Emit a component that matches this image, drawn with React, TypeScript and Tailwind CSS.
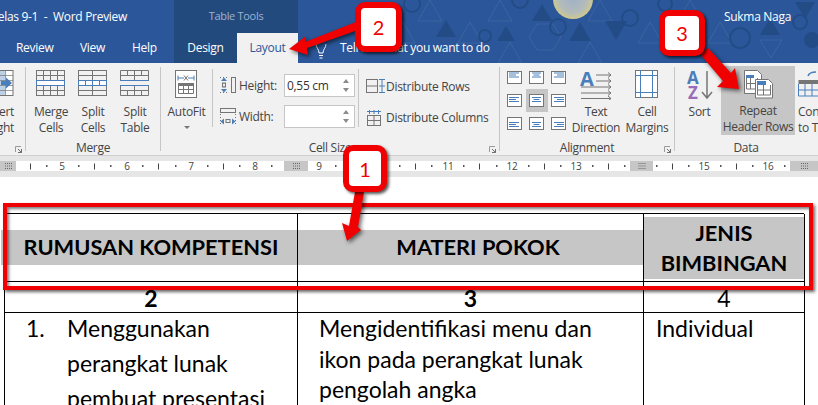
import type { ReactNode } from 'react';

const GRAY = '#757575';
const BLUE = '#4a7ebb';

function MergeIcon() {
  return (
    <svg width="30" height="26" fill="none" stroke={GRAY}>
      <rect x="0.5" y="0.5" width="28" height="25" />
      <path d="M0 5.5h29M0 20.5h29M7.5 0v10M14.5 0v10M21.5 0v10M7.5 15v10M14.5 15v10M21.5 15v10" />
      <rect x="0.5" y="10.5" width="28" height="5" fill="#fff" stroke={BLUE} />
    </svg>
  );
}

function SplitCellsIcon() {
  return (
    <svg width="30" height="26" fill="none" stroke={GRAY}>
      <rect x="0.5" y="0.5" width="28" height="25" />
      <path d="M0 5.5h29M0 20.5h29M14.5 0v10M14.5 15v10" />
      <rect x="0.5" y="10.5" width="28" height="5" fill="#fff" stroke={BLUE} />
      <path d="M7.5 10v5M14.5 10v5M21.5 10v5" stroke={BLUE} />
    </svg>
  );
}

function SplitTableIcon() {
  return (
    <svg width="30" height="26" fill="none" stroke={GRAY}>
      <path d="M0.5 10V0.5h28V10M0.5 15v10.5h28V15M0 5.5h29M0 20.5h29M7.5 0v5M14.5 0v10M21.5 0v5M7.5 20v5M14.5 15v10M21.5 20v5" />
      <path d="M0 10.5h29M0 15.5h29" stroke={BLUE} />
    </svg>
  );
}

function AutoFitIcon() {
  return (
    <svg width="23" height="28" fill="none">
      <rect x="0.5" y="0.5" width="21" height="27" fill="#fff" stroke={GRAY} />
      <path d="M3 8h6M13 8h6M3 5.5v5M19 5.5v5" stroke={BLUE} />
      <path d="M9 5.5l4 5M13 5.5l-4 5" stroke={GRAY} />
      <rect x="3" y="13" width="16" height="3" fill={GRAY} />
      <path d="M3.5 16v7.5h15V16M3 19.5h16M8.5 16v8M13.5 16v8" stroke={GRAY} />
    </svg>
  );
}

function HeightIcon() {
  return (
    <svg width="17" height="17" fill="none">
      <rect x="11.5" y="0.5" width="4" height="15" stroke={GRAY} />
      <path d="M4 3v10" stroke={GRAY} strokeDasharray="1 2" />
      <path d="M1 4l3-3.5L7 4zM1 12l3 3.5L7 12z" fill={BLUE} />
      <rect x="2.5" y="6" width="3" height="4" stroke={GRAY} />
      <path d="M0 0.5h9M0 15.5h9" stroke={GRAY} strokeDasharray="1 2" />
    </svg>
  );
}

function WidthIcon() {
  return (
    <svg width="17" height="17" fill="none">
      <rect x="0.5" y="0.5" width="15" height="4" stroke={GRAY} />
      <path d="M0.5 6v10M15.5 6v10" stroke={GRAY} strokeDasharray="1 2" />
      <path d="M4 10.5L0.5 13.5 4 16.5zM12 10.5l3.5 3-3.5 3z" fill={BLUE} />
      <rect x="6" y="11.5" width="4" height="3" stroke={GRAY} />
    </svg>
  );
}

function DistRowsIcon() {
  return (
    <svg width="20" height="15" fill="none">
      <rect x="0.5" y="0.5" width="11" height="13" stroke={GRAY} />
      <path d="M0 7h12" stroke={GRAY} />
      <path d="M13 0.5h6M13 7h6M13 13.5h6M16 0v14" stroke={BLUE} />
    </svg>
  );
}

function DistColsIcon() {
  return (
    <svg width="20" height="16" fill="none">
      <path d="M1 1.5h14M3.5 0v4M8 0v4M12.5 0v4" stroke={BLUE} />
      <rect x="1.5" y="5.5" width="13" height="10" stroke={GRAY} />
      <path d="M1 10.5h14M8 5v11" stroke={GRAY} />
    </svg>
  );
}

function InsertRightIcon() {
  return (
    <svg width="15" height="26" fill="none" className="-ml-px">
      <rect x="-6" y="0.5" width="20" height="25" fill="#fff" stroke={GRAY} />
      <rect x="-6" y="1" width="12" height="24" fill="#bcd0e6" />
      <path d="M-6 5.5h20M-6 10.5h20M-6 15.5h20M-6 20.5h20M6.5 0v26" stroke={GRAY} strokeOpacity="0.7" />
      <path d="M2 11h5V7.5L13 13l-6 5.500V15H2z" fill={BLUE} />
    </svg>
  );
}

function AlignCell({ h, v }: { h: number; v: number }) {
  const y = [1.5, 3, 5][v];
  const xs = [
    [2, 12, 2, 9, 2, 12],
    [3, 12, 4.5, 10.5, 3, 12],
    [3, 13, 6, 13, 3, 13],
  ][h];
  return (
    <svg width="16" height="14" fill="#fff">
      <rect x="0.5" y="0.5" width="14" height="12" stroke={GRAY} />
      <path
        d={`M${xs[0]} ${y + 0.5}H${xs[1]}M${xs[2]} ${y + 2.5}H${xs[3]}M${xs[4]} ${y + 4.5}H${xs[5]}`}
        stroke={BLUE}
        fill="none"
      />
    </svg>
  );
}

function TextDirectionIcon() {
  return (
    <svg width="32" height="30" fill="none">
      <text x="0" y="16" fill={BLUE} fontSize="20" fontWeight="700" fontFamily="Open Sans">
        A
      </text>
      <path
        d="M16 5h15M16 11h15M1 17h30M1 23h30M1 28.500h30M28 2.500l3 2.500-3 2.500M28 8.500l3 2.500-3 2.500M28 14.500l3 2.500-3 2.500M28 20.500l3 2.500-3 2.500M28 26l3 2.500-3 2.500"
        stroke={GRAY}
      />
    </svg>
  );
}

function CellMarginsIcon() {
  return (
    <svg width="24" height="29" fill="none">
      <rect x="0.5" y="0.5" width="22" height="27" fill="#fff" stroke={GRAY} />
      <path d="M5.500 0v28M17.500 0v28M0 5.500h23M0 22.500h23" stroke={BLUE} />
    </svg>
  );
}

function SortIcon() {
  return (
    <svg width="26" height="30" fill="none">
      <text x="0" y="14" fill={BLUE} fontSize="17" fontWeight="700" fontFamily="Open Sans">
        A
      </text>
      <text x="1" y="29" fill="#9a6bb8" fontSize="17" fontWeight="700" fontFamily="Open Sans">
        Z
      </text>
      <path d="M20 1v26M15 22l5 6 5-6" stroke={GRAY} strokeWidth="1.500" />
    </svg>
  );
}

function RepeatIcon() {
  return (
    <svg width="29" height="29" fill="none">
      <path d="M0.500 0.500h13l4 4v19H0.500z" fill="#fff" stroke={GRAY} />
      <rect x="2" y="5" width="8" height="3" fill={BLUE} />
      <path d="M2.500 8v11h11V8M2 13.500h12M6.500 8v11" stroke={GRAY} />
      <path d="M11.500 9.500h13l4 4v14.500h-17z" fill="#fff" stroke={GRAY} />
      <rect x="13" y="11" width="9" height="4" fill={BLUE} />
      <path d="M13.500 15v10h13V15M13 20h14M19.500 15v10" stroke={GRAY} />
    </svg>
  );
}

function ConvertIcon() {
  return (
    <svg width="20" height="28" fill="none">
      <path d="M10 6c1-3 4-4 8-4" stroke={BLUE} strokeWidth="1.500" />
      <rect x="0.500" y="10" width="20" height="4" fill={GRAY} />
      <path d="M0.500 14v12h20M0 20h20M7 14v12M14 14v12" stroke={BLUE} />
    </svg>
  );
}

function Expander() {
  return (
    <svg width="7" height="7" fill="none" className="absolute right-[3px] bottom-[2px]">
      <path d="M0.500 6V0.500H6" stroke="#9a9a9a" />
      <path d="M3 3l3.500 3.500M6.500 3v3.500H3" stroke="#6f6f6f" />
    </svg>
  );
}

function BigButton({ icon, lines, w, active }: { icon: ReactNode; lines: ReactNode[]; w: string; active?: boolean }) {
  return (
    <div className={`${w} flex flex-col items-center ${active ? 'bg-[#c6c6c6] h-[69px] -mt-[4px] pt-[4px]' : ''}`}>
      <div className="h-[34px] flex justify-center">{icon}</div>
      {lines.map((line, i) => (
        <div key={i} className="h-4 leading-4 whitespace-nowrap">
          {line}
        </div>
      ))}
    </div>
  );
}

function Group({ label, w, children, expander }: { label: string; w: string; children: ReactNode; expander?: boolean }) {
  return (
    <div className={`${w} h-full flex flex-col shrink-0`}>
      <div className="flex-1 flex pt-[7px]">{children}</div>
      <div className="relative h-4 leading-[18px] text-center">
        {label}
        {expander && <Expander />}
      </div>
    </div>
  );
}

function Sep() {
  return <div className="w-px h-[84px] my-1 bg-[#c6c6c6] shrink-0" />;
}

function Spinner({ value }: { value?: string }) {
  return (
    <div className="w-[71px] h-[23px] ml-px bg-white border border-[#c6c6c6] flex items-center justify-between pl-[2px] pr-[5px]">
      <span className="text-[#333]">{value}</span>
      <div className="flex flex-col gap-[5px]">
        <div className="w-0 h-0 border-x-[3px] border-x-transparent border-b-[4px] border-b-[#8a8a8a]" />
        <div className="w-0 h-0 border-x-[3px] border-x-transparent border-t-[4px] border-t-[#8a8a8a]" />
      </div>
    </div>
  );
}

function TitlePattern() {
  const filled = [
    'M542 4l10 17h-20z', 'M580 22l11 19h-22z', 'M605 21h22l-11 19z', 'M506 26l9 15h-18z', 'M680 20h20l-10 17z',
    'M770 18l10 17h-20z', 'M446 20l10 17h-20z', 'M795 2h20l-10 17z',
  ];
  const lines = [
    'M500 0l12 21h-24z', 'M537 24h16l8 13-8 13h-16l-8-13z', 'M600 0l12 21h-24z', 'M650 22l12 21h-24z',
    'M690 0l12 21h-24z', 'M720 22l12 21h-24z', 'M760 40h22l-11 18z', 'M470 22l12 21h-24z', 'M430 0l12 21h-24z', 'M403 22l12 21h-24z',
    'M590 42l12 21h-24z', 'M510 42l12 21h-24z',
  ];
  const rings = [
    [520, 0, 8], [558, 27, 8], [630, 18, 8], [740, 38, 10], [665, 4, 7], [412, 4, 8], [485, 36, 6], [800, 22, 7],
  ];
  return (
    <svg width="518" height="63" viewBox="300 0 518 63" fill="none" className="absolute right-0 top-0">
      <defs>
        <radialGradient id="sun">
          <stop offset="0%" stopColor="#9fb0c8" />
          <stop offset="70%" stopColor="#b4bcb8" />
          <stop offset="100%" stopColor="#cfc88e" />
        </radialGradient>
      </defs>
      {lines.map((d) => (
        <path key={d} d={d} stroke="#3a659f" />
      ))}
      {filled.map((d) => (
        <path key={d} d={d} fill="#234c87" />
      ))}
      {rings.map(([x, y, r]) => (
        <circle key={x} cx={x} cy={y} r={r} stroke="#234c87" strokeWidth="2" />
      ))}
      <circle cx="812" cy="40" r="8" fill="#234c87" />
      <circle cx="573" cy="-1" r="20" fill="url(#sun)" />
    </svg>
  );
}

function Ruler() {
  const labels: [number, number][] = [
    [5, 62], [6, 127], [7, 191], [8, 255], [9, 319], [11, 448], [12, 512], [13, 576], [15, 704], [16, 768],
  ];
  const majors = Array.from({ length: 13 }, (_, i) => 30 + i * 64.2);
  const marks = Array.from({ length: 26 }, (_, i) => 14 + i * 32.1);
  return (
    <svg width="818" height="10" className="block">
      <rect width="818" height="10" fill="#fff" />
      {majors.map((x) => (
        <rect key={x} x={Math.round(x)} y="2.500" width="1" height="6" fill="#444" />
      ))}
      {marks.map((x) => (
        <rect key={x} x={Math.round(x)} y="4" width="1.500" height="2" fill="#555" />
      ))}
      {labels.map(([n, x]) => (
        <text key={n} x={x} y="9" textAnchor="middle" fontSize="10" fontFamily="Open Sans" fill="#444">
          {n}
        </text>
      ))}
      {[[0, 16], [284, 24], [630, 23], [790, 28]].map(([x, w]) => (
        <g key={x}>
          <rect x={x} y="0" width={w} height="10" fill="#c6c6c6" />
          <path
            d={`M${x + w / 2 - 3} 2.500h7M${x + w / 2 - 3} 5h7M${x + w / 2 - 3} 7.500h7`}
            stroke="#666"
            strokeDasharray="1 1"
          />
        </g>
      ))}
    </svg>
  );
}

function Callout({ n, className }: { n: number; className: string }) {
  return (
    <div className={`absolute ${className} bg-white border-[6px] border-[#f00000] rounded-[10px] shadow-[2px_2px_3px_rgba(0,0,0,0.65)] flex items-center justify-center text-[#f00000] text-[20px] font-['Lato']`}>
      {n}
    </div>
  );
}

export default function App() {
  const aligns = [0, 1, 2].flatMap((v) => [0, 1, 2].map((h) => ({ v, h })));
  return (
    <div className="relative w-[818px] h-[405px] overflow-hidden bg-white font-['Open_Sans',sans-serif] text-[12px] text-[#444] tracking-[-0.3px]">
      {/* title bar + tabs */}
      <div className="relative h-[63px] bg-[#2b579a] text-white">
        <TitlePattern />
        <div className="relative flex h-[33px] items-center">
          <div className="w-[174px] flex justify-end pr-[47px] whitespace-pre overflow-hidden">Kelas 9-1  -  Word Preview</div>
          <div className="w-[124px] h-full bg-[#234a7d] text-[#9fb3d1] text-[11px] flex items-center justify-center">Table Tools</div>
          <div className="ml-auto w-[94px]">Sukma Naga</div>
        </div>
        <div className="relative flex h-[30px] items-center">
          <div className="ml-[16px] w-[64px]">Review</div>
          <div className="w-[52px]">View</div>
          <div className="w-[42px]">Help</div>
          <div className="w-[63px] h-full bg-[#234a7d] flex items-center justify-center">Design</div>
          <div className="w-[61px] h-full bg-[#f1f1f1] text-[#2b579a] flex items-center justify-center">Layout</div>
          <svg width="12" height="16" fill="none" stroke="#fff" className="ml-[17px] mt-[5px]">
            <path d="M1 1c0 4 3 5 3 9h4c0-4 3-5 3-9M4 12.500h4M4.500 15h3" />
          </svg>
          <div className="ml-[13px]">Tell me what you want to do</div>
        </div>
      </div>

      {/* ribbon */}
      <div className="flex h-[92px] bg-[#f1f1f1] overflow-hidden">
        <Group label="" w="w-[25px]" expander>
          <div className="w-[14px] flex flex-col items-end">
            <div className="h-[34px] pl-0"><InsertRightIcon /></div>
            <div className="h-4 leading-4">ert</div>
            <div className="h-4 leading-4">ght</div>
          </div>
        </Group>
        <Sep />
        <Group label="Merge" w="w-[134px]">
          <div className="flex pl-[4px]">
            <BigButton w="w-[42px]" icon={<MergeIcon />} lines={['Merge', 'Cells']} />
            <BigButton w="w-[42px]" icon={<SplitCellsIcon />} lines={['Split', 'Cells']} />
            <BigButton w="w-[42px]" icon={<SplitTableIcon />} lines={['Split', 'Table']} />
          </div>
        </Group>
        <Sep />
        <Group label="Cell Size" w="w-[338px]" expander>
          <div className="flex">
            <div className="w-[51px] flex flex-col items-center">
              <div className="h-[34px]"><AutoFitIcon /></div>
              <div className="h-4 leading-4">AutoFit</div>
              <div className="mt-[6px] w-0 h-0 border-x-[3px] border-x-transparent border-t-[3px] border-t-[#777]" />
            </div>
            <div className="w-px h-[58px] -mt-[1px] bg-[#c6c6c6]" />
            <div className="w-[145px] pl-[7px] pt-[4px] flex flex-col gap-[8px]">
              <div className="flex items-center">
                <HeightIcon />
                <span className="ml-[2px] w-[44px]">Height:</span>
                <Spinner value="0,55 cm" />
              </div>
              <div className="flex items-center">
                <WidthIcon />
                <span className="ml-[2px] w-[44px]">Width:</span>
                <Spinner />
              </div>
            </div>
            <div className="w-px h-[58px] -mt-[1px] bg-[#c6c6c6]" />
            <div className="pl-[7px] pt-[8px] flex flex-col gap-[14px]">
              <div className="flex items-center h-[17px]"><DistRowsIcon /><span>Distribute Rows</span></div>
              <div className="flex items-center h-[17px]"><DistColsIcon /><span>Distribute Columns</span></div>
            </div>
          </div>
        </Group>
        <Sep />
        <Group label="Alignment" w="w-[174px]" expander>
          <div className="flex">
            <div className="ml-[4px] grid grid-cols-[repeat(3,22px)] grid-rows-[repeat(3,23px)] w-[66px] h-[69px] -mt-[4px]">
              {aligns.map(({ v, h }) => (
                <div key={`${v}${h}`} className={`flex items-center justify-center ${v === 1 && h === 1 ? 'bg-[#c6c6c6]' : ''}`}>
                  <AlignCell v={v} h={h} />
                </div>
              ))}
            </div>
            <BigButton w="w-[50px] ml-[1px]" icon={<TextDirectionIcon />} lines={['Text', 'Direction']} />
            <BigButton w="w-[50px] ml-[1px]" icon={<CellMarginsIcon />} lines={['Cell', 'Margins']} />
          </div>
        </Group>
        <Sep />
        <Group label="Data" w="w-[142px]">
          <div className="flex">
            <BigButton w="w-[46px] pl-[3px]" icon={<SortIcon />} lines={['Sort']} />
            <BigButton w="w-[74px]" active icon={<RepeatIcon />} lines={['Repeat', 'Header Rows']} />
            <BigButton w="w-[22px] items-start pl-[3px]" icon={<ConvertIcon />} lines={['Convert', 'to Text']} />
          </div>
        </Group>
      </div>

      {/* ruler strip */}
      <div className="h-[22px] bg-[#e6e6e6] border-t border-[#d0d0d0] pt-[5px]">
        <Ruler />
      </div>

      {/* document table */}
      <div className="pt-[36px] pl-[4px] font-['Lato',sans-serif] text-black tracking-normal">
        <div className="w-[800px] grid grid-cols-[293px_346px_161px] grid-rows-[68px_31px_auto] border-t border-l border-black">
          <div className="border-r border-b border-black flex items-center">
            <div className="w-[calc(100%+4px)] -ml-[4px] pl-[4px] h-[35px] bg-[#c6c6c6] flex items-center justify-center font-bold text-[21.800px]">RUMUSAN KOMPETENSI</div>
          </div>
          <div className="border-r border-b border-black flex items-center">
            <div className="w-full h-[35px] pl-[15px] bg-[#c6c6c6] flex items-center justify-center font-bold text-[21.800px]">MATERI POKOK</div>
          </div>
          <div className="border-r border-b border-black pt-[3px] pb-[2px]">
            <div className="h-full bg-[#c6c6c6] flex flex-col items-center justify-center font-bold text-[21.800px] leading-[30px]">
              <div>JENIS</div>
              <div>BIMBINGAN</div>
            </div>
          </div>
          <div className="border-r border-b border-black text-center font-bold text-[23px] leading-[32px] h-[31px]">2</div>
          <div className="border-r border-b border-black text-center font-bold text-[23px] leading-[32px] h-[31px]">3</div>
          <div className="border-r border-b border-black text-center text-[23px] leading-[32px] h-[31px]">4</div>
          <div className="border-r border-black text-[23px] leading-[35px] flex pl-[21px] -mt-[2px]">
            <div className="w-[41px]">1.</div>
            <div>
              <div>Menggunakan</div>
              <div>perangkat lunak</div>
              <div>pembuat presentasi</div>
            </div>
          </div>
          <div className="border-r border-black text-[23px] leading-[30.500px] pl-[21px]">
            <div>Mengidentifikasi menu dan</div>
            <div>ikon pada perangkat lunak</div>
            <div>pengolah angka</div>
          </div>
          <div className="border-r border-black text-[23px] leading-[31px] pl-[12px]">Individual</div>
        </div>
      </div>

      {/* annotations */}
      <div className="absolute left-[3px] top-[203px] w-[810px] h-[87px] border-[4px] border-[#f00000] shadow-[2px_2px_3px_rgba(0,0,0,0.6),inset_2px_2px_3px_rgba(0,0,0,0.5)]" />
      <svg width="818" height="405" className="absolute left-0 top-0 drop-shadow-[2px_2px_2px_rgba(0,0,0,0.6)]" fill="#f00000">
        <polygon points="289,49 306,36 305,42 356,22 358,30 307,48 308,55" />
        <polygon points="700,54 708,48 731,73 735,68 739,89 717,87 723,81" />
        <polygon points="355,192 364,192 358,227 361,230 347,241 342,223 349,226" />
      </svg>
      <Callout n={2} className="left-[355px] top-[2px] w-[47px] h-[50px]" />
      <Callout n={3} className="left-[659px] top-[10px] w-[46px] h-[46px]" />
      <Callout n={1} className="left-[343px] top-[145px] w-[44px] h-[47px]" />
    </div>
  );
}
